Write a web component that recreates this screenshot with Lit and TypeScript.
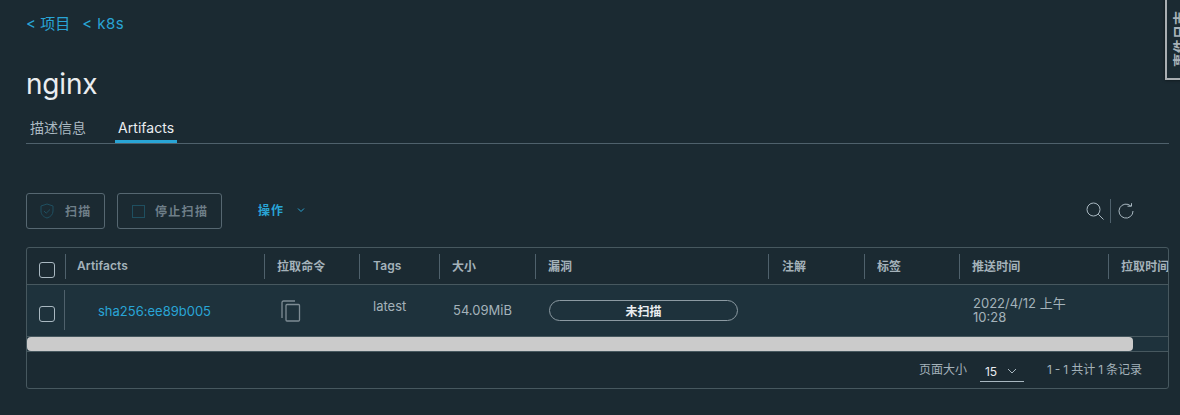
import { LitElement, html, css } from "lit";
import { customElement } from "lit/decorators.js";

const COLS = [
  { label: "Artifacts", cls: "p12" },
  { label: "拉取命令", cls: "p13" },
  { label: "Tags", cls: "p14" },
  { label: "大小", cls: "p13" },
  { label: "漏洞", cls: "p13" },
  { label: "注解", cls: "p14" },
  { label: "标签", cls: "p13" },
  { label: "推送时间", cls: "p13" },
  { label: "拉取时间", cls: "p13" },
];

@customElement("app-root")
export class AppRoot extends LitElement {
  static styles = css`
    :host {
      display: block;
      width: 1180px;
      height: 415px;
      background: #1b2a32;
      font-family: "Inter", "Noto Sans CJK SC", sans-serif;
      color: #acbac3;
      overflow: hidden;
      position: relative;
      box-sizing: border-box;
    }
    .page { padding: 14px 11px 0 26px; display: flex; flex-direction: column; }
    .crumbs { display: flex; gap: 12px; color: #29a5d6; font-size: 15px; line-height: 19px; height: 19px; }
    .crumbs .k { letter-spacing: .5px; }
    .title { margin: 34px 0 0; font-size: 28px; font-weight: 400; color: #eaedf0; line-height: 34px; height: 34px; letter-spacing: -.2px; }
    .tabs { margin-top: 16px; height: 26px; border-bottom: 1px solid #4f616c; display: flex; }
    .tab { font-size: 14px; line-height: 17px; padding: 2px 4px 0; height: 24px; color: #acbac3; }
    .tab.on { color: #eaedf0; margin-left: 25px; border-bottom: 3px solid #29a5d6; padding: 2px 3px 0; height: 21px; letter-spacing: .05px; }
    .toolbar { margin-top: 49px; height: 36px; display: flex; align-items: center; }
    .btn {
      height: 36px; box-sizing: border-box; border: 1px solid #566771; border-radius: 3px;
      display: flex; align-items: center; color: #6e7e88; font-size: 12px; font-weight: 700; letter-spacing: 1.3px;
    }
    .btn span { padding-bottom: 1px; }
    .btn.scan { width: 79px; padding-left: 13px; gap: 11px; }
    .btn.stop { width: 105px; margin-left: 12px; padding-left: 14px; gap: 10px; }
    .ops { margin-left: 36px; color: #29a5d6; font-size: 12px; font-weight: 700; letter-spacing: 1px; display: flex; align-items: center; gap: 13px; padding-bottom: 3px; }
    .tools { margin-left: auto; margin-right: 35px; margin-bottom: 1px; display: flex; align-items: center; }
    .sep { width: 1px; height: 24px; background: #4f616c; margin: 0 7px 0 6px; }
    .grid {
      margin-top: 18px; height: 142px; border: 1px solid #47585f; border-radius: 3px;
      box-sizing: border-box; overflow: hidden; display: flex; flex-direction: column; width: 1143px;
    }
    .head, .row {
      display: grid;
      grid-template-columns: 38px 199px 95px 80px 96px 233px 96px 95px 149px 90px;
      flex: none;
    }
    .head { height: 37px; border-bottom: 1px solid #47585f; box-sizing: border-box; }
    .check { display: flex; align-items: center; padding-left: 12px; box-sizing: border-box; }
    .box { width: 16px; height: 16px; border: 1px solid #a9b8c1; border-radius: 3px; box-sizing: border-box; }
    .head .box { margin-top: 7px; }
    .hcell {
      box-sizing: border-box; position: relative; font-size: 12px; font-weight: 600; color: #a4b2ba;
      white-space: nowrap; display: flex; align-items: center; height: 36px; overflow: hidden; letter-spacing: .1px; padding-bottom: 2px;
    }
    .hcell::before { content: ""; position: absolute; left: 0; top: 6px; height: 25px; width: 1px; background: #4f616c; }
    .p12 { padding-left: 12px; }
    .p13 { padding-left: 13px; }
    .p14 { padding-left: 14px; }
    .row { height: 51px; background: #1e323c; font-size: 13px; color: #a4b2ba; }
    .row .check { align-items: flex-end; padding-bottom: 14px; position: relative; }
    .row .check::after { content: ""; position: absolute; left: 37px; top: 5px; height: 40px; width: 1px; background: #4f616c; }
    .cell { box-sizing: border-box; display: flex; align-items: center; }
    .link { color: #29a5d6; padding-left: 33px; }
    .copy { padding-left: 17px; }
    .tag { padding-left: 14px; padding-bottom: 9px; }
    .size { padding-left: 14px; padding-bottom: 2px; }
    .pill {
      width: 189px; height: 21px; border: 1px solid #8c9aa2; border-radius: 11px; box-sizing: border-box;
      color: #eaedf0; font-weight: 600; font-size: 12px; display: flex; align-items: center; justify-content: center; margin-left: 14px; padding-bottom: 1px;
    }
    .time { padding-left: 14px; line-height: 14px; padding-bottom: 2px; }
    .bar { height: 16px; flex: none; background: #1e323c; border-top: 1px solid #47585f; border-bottom: 1px solid #47585f; box-sizing: border-box; display: flex; }
    .thumb { width: 1106px; background: #cbcbcb; border-radius: 4px; }
    .foot { flex: 1; display: flex; align-items: center; font-size: 12px; color: #a4b2ba; padding: 0 26px 4px 0; justify-content: flex-end; }
    .count { word-spacing: -.4px; }
    .size-sel {
      width: 44px; height: 21px; margin: 7px 23px 0 13px; border-bottom: 1px solid #a9b8c1; box-sizing: border-box;
      display: flex; align-items: center; justify-content: space-between; padding: 0 7px 0 5px; color: #eaedf0;
    }
    .side {
      position: absolute; right: -13px; top: -2px; width: 28px; height: 82px; box-sizing: border-box;
      border: 2px solid #a9aeb2; background: #1b2a32; color: #a8b2b8; font-size: 14px; font-weight: 600;
      writing-mode: vertical-rl; text-orientation: sideways; transform: rotate(180deg);
      display: flex; align-items: center; justify-content: center;
      box-shadow: 0 0 3px rgba(0,0,0,.6); white-space: nowrap;
    }
  `;

  render() {
    return html`
      <div class="page">
        <div class="crumbs"><span>&lt; 项目</span><span class="k">&lt; k8s</span></div>
        <h1 class="title">nginx</h1>
        <div class="tabs">
          <div class="tab">描述信息</div>
          <div class="tab on">Artifacts</div>
        </div>
        <div class="toolbar">
          <div class="btn scan">
            <svg width="14" height="16" viewBox="0 0 14 16" fill="none" stroke="#1f4f60" stroke-width="1"><path d="M7 1 13 3v5c0 3.500-2.500 6-6 7C3.500 14 1 11.500 1 8V3z"/><path d="M4 8l2.200 2.200L10 6.500"/></svg>
            <span>扫描</span>
          </div>
          <div class="btn stop">
            <svg width="13" height="13" viewBox="0 0 13 13" fill="none" stroke="#1f4f60" stroke-width="1"><rect x=".5" y=".5" width="12" height="12"/></svg>
            <span>停止扫描</span>
          </div>
          <div class="ops">
            <span>操作</span>
            <svg width="8" height="6" viewBox="0 0 8 6" fill="none" stroke="#29a5d6" stroke-width="1"><path d="M1 1.500 4 4.500 7 1.500"/></svg>
          </div>
          <div class="tools">
            <svg width="18" height="18" viewBox="0 0 18 18" fill="none" stroke="#a9b8c1" stroke-width="1"><circle cx="7.500" cy="7.500" r="6.500"/><path d="M12.200 12.200 17.500 17.500"/></svg>
            <div class="sep"></div>
            <svg width="16" height="16" viewBox="0 0 16 16" fill="none" stroke="#a9b8c1" stroke-width="1"><path d="M12.800 3A7 7 0 1 0 15 8"/><path d="M9.500 3.200h4v-3"/></svg>
          </div>
        </div>
        <div class="grid">
          <div class="head">
            <div class="check"><div class="box"></div></div>
            ${COLS.map((c) => html`<div class="hcell ${c.cls}">${c.label}</div>`)}
          </div>
          <div class="row">
            <div class="check"><div class="box"></div></div>
            <div class="cell link">sha256:ee89b005</div>
            <div class="cell copy">
              <svg width="20" height="22" viewBox="0 0 20 22" fill="none" stroke="#7e8c94" stroke-width="1.300"><path d="M14 1H2.500C1.700 1 1 1.700 1 2.500V18"/><rect x="5" y="4.500" width="13.500" height="16.500" rx="1"/></svg>
            </div>
            <div class="cell tag">latest</div>
            <div class="cell size">54.09MiB</div>
            <div class="cell"><div class="pill">未扫描</div></div>
            <div class="cell"></div>
            <div class="cell"></div>
            <div class="cell time">2022/4/12 上午<br />10:28</div>
          </div>
          <div class="bar"><div class="thumb"></div></div>
          <div class="foot">
            <span>页面大小</span>
            <div class="size-sel"><span>15</span>
              <svg width="10" height="6" viewBox="0 0 10 6" fill="none" stroke="#a9b8c1" stroke-width="1"><path d="M1 1 5 5 9 1"/></svg>
            </div>
            <span class="count">1 - 1 共计 1 条记录</span>
          </div>
        </div>
      </div>
      <div class="side">事件日志</div>
    `;
  }
}
